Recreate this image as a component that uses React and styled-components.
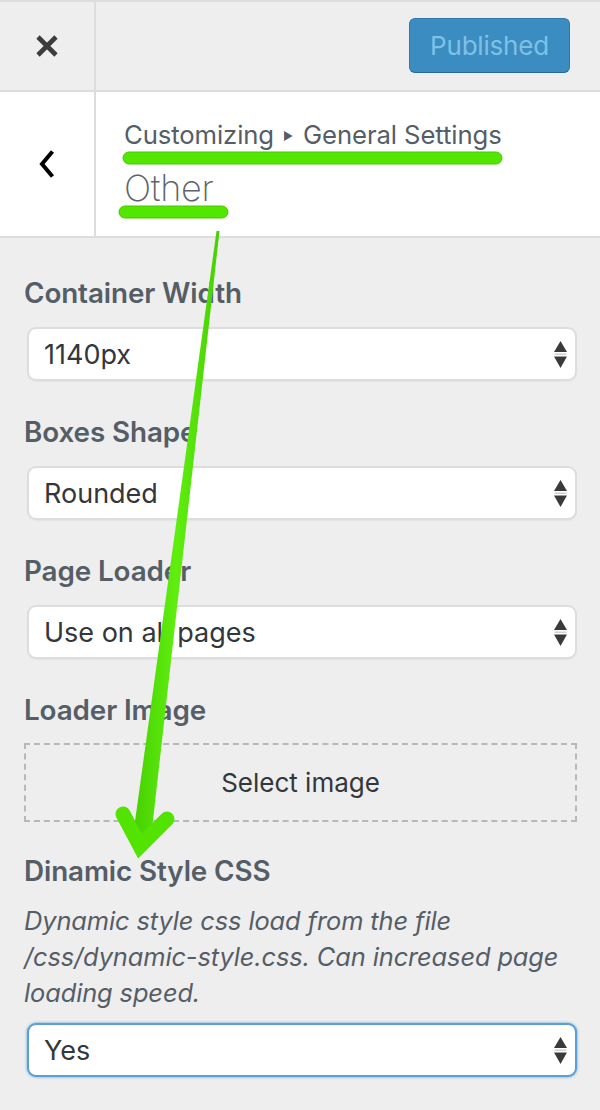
import React from "react";
import styled, { createGlobalStyle } from "styled-components";

const Global = createGlobalStyle`
  html, body { margin: 0; padding: 0; background: #eeeeee; }
  body { font-family: Inter, "Noto Sans", "Liberation Sans", sans-serif; -webkit-font-smoothing: antialiased; }
  * { box-sizing: border-box; }
`;

const Page = styled.div`
  position: relative;
  width: 600px;
  height: 1110px;
  background: #eeeeee;
  overflow: hidden;
`;

const TopBar = styled.header`
  display: flex;
  height: 92px;
  border-top: 2px solid #dddddd;
  border-bottom: 2px solid #dddddd;
  background: #eeeeee;
`;

const IconCell = styled.div`
  width: 96px;
  flex: none;
  display: flex;
  align-items: center;
  justify-content: center;
  border-right: 2px solid #dddddd;
`;

const Actions = styled.div`
  flex: 1;
  display: flex;
  align-items: center;
  justify-content: flex-end;
  padding-right: 30px;
`;

const PublishButton = styled.button`
  height: 55px;
  width: 161px;
  border-radius: 6px;
  border: 1px solid #2e78aa;
  border-bottom-color: #276a98;
  background: #3b8cc0;
  color: #7ec1e6;
  font-family: inherit;
  font-size: 26px;
  font-weight: 400;
  letter-spacing: -0.2px;
  padding: 0;
  margin-top: -2px;
`;

const SectionTitle = styled.section`
  display: flex;
  height: 146px;
  background: #ffffff;
  border-bottom: 2px solid #dddddd;
`;

const TitleText = styled.div`
  flex: 1;
  display: flex;
  flex-direction: column;
  justify-content: center;
  padding-left: 28px;
  padding-bottom: 2px;
  color: #555d66;
`;

const Crumb = styled.div`
  font-size: 25.7px;
  line-height: 32px;
  letter-spacing: -0.1px;
`;

const Sep = styled.span`
  display: inline-block;
  font-size: 11px;
  vertical-align: 4px;
  margin: 0 10px 0 9px;
`;

const Heading = styled.h3`
  margin: 16px 0 0;
  font-size: 36px;
  line-height: 40px;
  font-weight: 200;
  letter-spacing: -0.3px;
  color: #5d646c;
`;

const Content = styled.div`
  padding: 38px 23px 0 24px;
`;

const Control = styled.div`
  margin-bottom: ${(p) => p.$gap ?? 34}px;
`;

const Label = styled.div`
  font-size: 27.8px;
  line-height: 34px;
  font-weight: 600;
  color: #555d66;
  margin-bottom: ${(p) => p.$gap ?? 17}px;
  letter-spacing: -0.1px;
`;

const Description = styled.div`
  font-size: 25.4px;
  line-height: 36px;
  font-style: italic;
  color: #555d66;
  margin-bottom: 12px;
  letter-spacing: -0.1px;
`;

const SelectBox = styled.div`
  margin-left: 3px;
  height: 54px;
  display: flex;
  align-items: center;
  justify-content: space-between;
  padding: 0 8px 0 15px;
  background: #ffffff;
  border: 2px solid ${(p) => (p.$focus ? "#5b9dd9" : "#dddddd")};
  border-radius: 9px;
  box-shadow: ${(p) =>
    p.$focus ? "0 0 3px rgba(30,140,190,0.7)" : "0 1px 1px rgba(0,0,0,0.04)"};
  font-size: 27px;
  color: #32373c;
`;

const MediaButton = styled.div`
  height: 79px;
  display: flex;
  align-items: center;
  justify-content: center;
  border: 2px dashed #b4b9be;
  font-size: 26px;
  color: #32373c;
`;

const Overlay = styled.svg`
  position: absolute;
  left: 0;
  top: 0;
  pointer-events: none;
`;

const Updown = () => (
  <svg width="13" height="27" viewBox="0 0 13 27" aria-hidden="true">
    <path d="M6.5 0 L13 11 L0 11 Z" fill="#3a3a3a" />
    <rect x="0.5" y="12.5" width="12" height="1.5" fill="#d0d0d0" />
    <path d="M0 15.5 L13 15.5 L6.5 27 Z" fill="#3a3a3a" />
  </svg>
);

const Select = ({ value, focus }) => (
  <SelectBox $focus={focus}>
    <span>{value}</span>
    <Updown />
  </SelectBox>
);

export default function App() {
  return (
    <Page>
      <Global />
      <TopBar>
        <IconCell>
          <svg width="24" height="24" viewBox="0 0 24 24">
            <path d="M3 3 L21 21 M21 3 L3 21" stroke="#3c3c3c" strokeWidth="4.6" />
          </svg>
        </IconCell>
        <Actions>
          <PublishButton>Published</PublishButton>
        </Actions>
      </TopBar>
      <SectionTitle>
        <IconCell>
          <svg width="20" height="30" viewBox="0 0 20 30">
            <path d="M15.5 2.5 L5 15 L15.5 27.5" fill="none" stroke="#000" strokeWidth="4" />
          </svg>
        </IconCell>
        <TitleText>
          <Crumb>
            Customizing<Sep>▶</Sep>General Settings
          </Crumb>
          <Heading>Other</Heading>
        </TitleText>
      </SectionTitle>
      <Content>
        <Control>
          <Label>Container Width</Label>
          <Select value="1140px" />
        </Control>
        <Control>
          <Label>Boxes Shape</Label>
          <Select value="Rounded" />
        </Control>
        <Control>
          <Label>Page Loader</Label>
          <Select value="Use on all pages" />
        </Control>
        <Control $gap={32}>
          <Label $gap={16}>Loader Image</Label>
          <MediaButton>Select image</MediaButton>
        </Control>
        <Control>
          <Label $gap={15}>Dinamic Style CSS</Label>
          <Description>
            Dynamic style css load from the file /css/dynamic-style.css. Can increased page loading speed.
          </Description>
          <Select value="Yes" focus />
        </Control>
      </Content>
      <Overlay width="600" height="1110" viewBox="0 0 600 1110">
        <defs>
          <linearGradient id="shaft" x1="0" y1="0" x2="1" y2="0">
            <stop offset="0" stopColor="#46d000" />
            <stop offset="0.5" stopColor="#60ee10" />
            <stop offset="1" stopColor="#46d000" />
          </linearGradient>
        </defs>
        <rect x="123" y="152" width="379" height="12" rx="6" fill="#52e600" stroke="#44c800" strokeWidth="1" />
        <rect x="119" y="206" width="109" height="12" rx="6" fill="#52e600" stroke="#44c800" strokeWidth="1" />
        <polygon points="216.5,231 219.5,231 151,838 133,836" fill="url(#shaft)" />
        <polyline
          points="123,814 140,846 167,819"
          fill="none"
          stroke="#52e400"
          strokeWidth="15"
          strokeLinecap="round"
          strokeLinejoin="miter"
          strokeMiterlimit="10"
        />
      </Overlay>
    </Page>
  );
}
